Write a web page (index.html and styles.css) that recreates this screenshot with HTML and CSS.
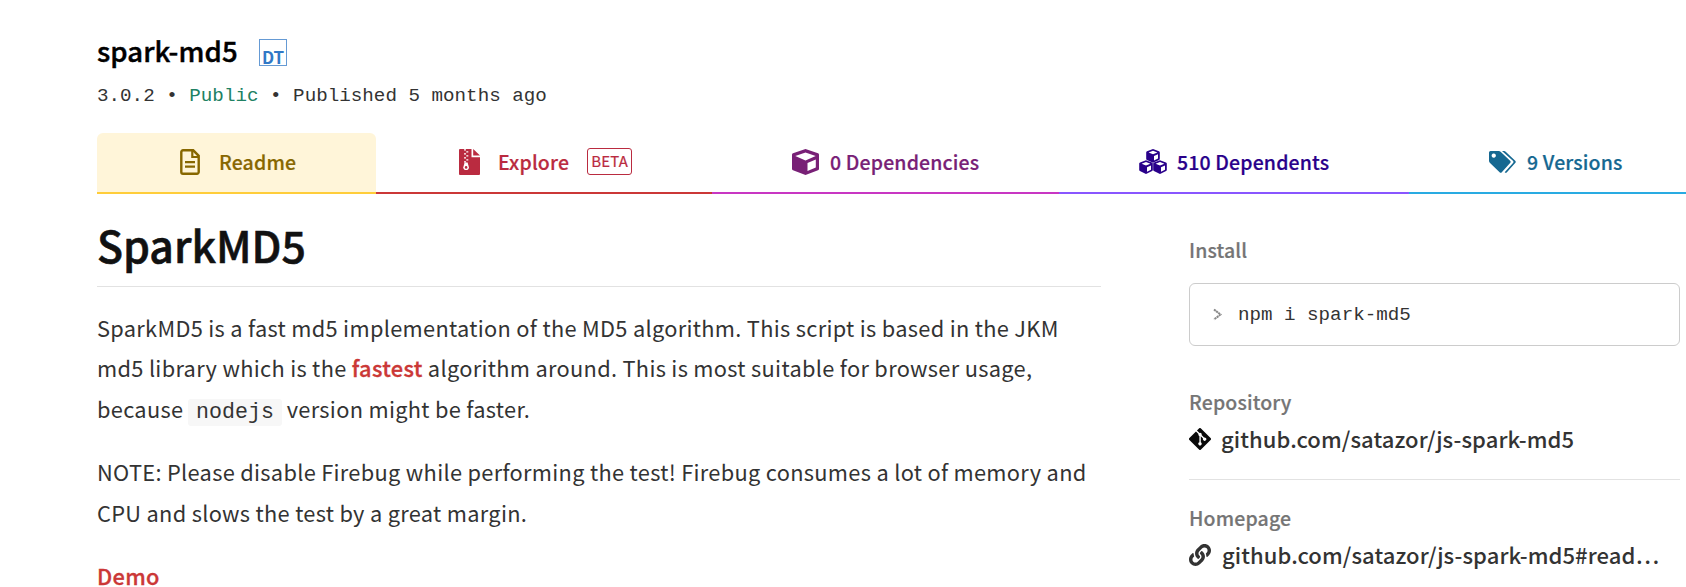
FILE: index.html
```html
<!DOCTYPE html>
<html lang="en">
<head>
<meta charset="utf-8">
<title>spark-md5</title>
<link rel="stylesheet" href="styles.css">
</head>
<body>
<main class="page">
  <header class="package">
    <div class="package-name"><h2 class="name">spark-md5</h2><span class="dt">DT</span></div>
    <div class="meta">3.0.2 • <span class="public">Public</span> • Published 5 months ago</div>
  </header>
  <nav class="tabs">
    <a class="tab readme">
      <svg class="icon-doc" viewBox="0 0 20 26"><path d="M3 1.3h10.2l5.5 5.5V23a1.7 1.7 0 0 1-1.7 1.7H3A1.7 1.7 0 0 1 1.300 23V3A1.700 1.700 0 0 1 3 1.300z" fill="none" stroke="currentColor" stroke-width="2.400"/><path d="M12.300 1.500V8h6.300M5 13.200h10M5 17.700h10" fill="none" stroke="currentColor" stroke-width="2.200"/></svg>
      <span class="label">Readme</span>
    </a>
    <a class="tab explore">
      <svg class="icon-zip" viewBox="0 0 21 26"><path d="M1 0h11.500v8.200H21V25a1 1 0 0 1-1 1H1a1 1 0 0 1-1-1V1a1 1 0 0 1 1-1z" fill="currentColor"/><path d="M14.200 0 21 6.500h-6.800z" fill="currentColor"/><path d="M5 .8h2M7.300 2.800h2M5 4.800h2M7.300 6.800h2M5 8.800h2M7.300 10.800h2M5 12.800h2" stroke="#fff" stroke-width="1.300"/><path d="M5.600 13.500h3l1.300 4.700a2.800 2.800 0 1 1-5.600 0z" fill="#fff"/><circle cx="7.100" cy="18.400" r="1.300" fill="currentColor"/></svg>
      <span class="label">Explore</span><span class="beta">BETA</span>
    </a>
    <a class="tab dependencies">
      <svg class="icon-cube" viewBox="0 0 27 26"><path d="M13.500 0 26 4.300q1 .4 1 1.500v14q0 1-1 1.500L13.500 26 1 21.300q-1-.5-1-1.500v-14q0-1.100 1-1.500zM3.300 7.100l10.200 4.300 10.200-4.300-10.200-3.700zM15.500 14v8l8.300-3.500v-8z" fill="currentColor" fill-rule="evenodd"/></svg>
      <span class="label">0 Dependencies</span>
    </a>
    <a class="tab dependents">
      <svg class="icon-cubes" viewBox="0 0 28 25"><defs><path id="cube" d="M7 0 13 2.300q.8.300.8 1.100v6.400q0 .7-.7 1.100L7 13.700.900 10.900q-.7-.4-.7-1.100V3.400Q.200 2.600 1 2.300zM2.600 3.500 7 5.300l4.400-1.800L7 1.800zM8 7v4.500l4-1.900V5.300z" fill="currentColor" fill-rule="evenodd"/></defs><use href="#cube" x="7"/><use href="#cube" y="11.200"/><use href="#cube" x="14" y="11.200"/></svg>
      <span class="label">510 Dependents</span>
    </a>
    <a class="tab versions">
      <svg class="icon-tags" viewBox="0 0 27 22"><path d="M1.500 0h8.300q1 0 1.800.8l9.500 9q1.100 1.100 0 2.200l-8.300 9.200q-1.100 1.100-2.200 0l-9.800-9.500Q0 10.900 0 9.800V1.500Q0 0 1.500 0zM4.700 2.500a2.100 2.100 0 1 0 .1 0z" fill="currentColor" fill-rule="evenodd"/><path d="M13 0h2.200q.8 0 1.500.7l9.500 9.100q1.100 1.100 0 2.200l-8.300 9.200q-1 1-2.200 0l8.300-9.300q1-1-.1-2.100z" fill="currentColor"/></svg>
      <span class="label">9 Versions</span>
    </a>
  </nav>
  <div class="columns">
    <article class="content">
      <h1 class="heading">SparkMD5</h1>
      <p class="para"><span class="line">SparkMD5 is a fast md5 implementation of the MD5 algorithm. This script is based in the JKM</span> <span class="line">md5 library which is the <a class="link">fastest</a> algorithm around. This is most suitable for browser usage,</span> <span class="line">because <code class="code">nodejs</code> version might be faster.</span></p>
      <p class="para"><span class="line">NOTE: Please disable Firebug while performing the test! Firebug consumes a lot of memory and</span> <span class="line">CPU and slows the test by a great margin.</span></p>
      <p class="para"><a class="link">Demo</a></p>
    </article>
    <aside class="sidebar">
      <h3 class="side-title">Install</h3>
      <div class="install"><svg class="prompt" viewBox="0 0 9 13"><path d="M1 1.500 7.500 6.500 1 11.500" fill="none" stroke="#888" stroke-width="2" stroke-dasharray="2.200 .5"/></svg><code class="command">npm i spark-md5</code></div>
      <section class="side-row repository">
        <h3 class="side-title">Repository</h3>
        <a class="side-link"><svg class="side-icon git" viewBox="0 0 92 92"><path fill="#0a0a0a" d="M90.155 41.965 50.036 1.847a5.918 5.918 0 0 0-8.369 0l-8.330 8.332L43.904 20.746a7.030 7.030 0 0 1 7.230 1.684 7.043 7.043 0 0 1 1.668 7.280l10.187 10.185a7.026 7.026 0 0 1 7.278 1.672 7.040 7.040 0 0 1 0 9.957 7.045 7.045 0 0 1-9.961 0 7.040 7.040 0 0 1-1.532-7.660l-9.500-9.497V59.360a7.040 7.040 0 0 1 1.860 11.290 7.040 7.040 0 0 1-9.957 0 7.040 7.040 0 0 1 0-9.958 7.034 7.034 0 0 1 2.308-1.539V33.926a7.001 7.001 0 0 1-2.308-1.535 7.049 7.049 0 0 1-1.516-7.700L29.242 14.273 1.734 41.777a5.918 5.918 0 0 0 0 8.371L41.855 90.270a5.920 5.920 0 0 0 8.368 0l39.932-39.934a5.925 5.925 0 0 0 0-8.371"/></svg><span class="side-text">github.com/satazor/js-spark-md5</span></a>
      </section>
      <section class="side-row homepage">
        <h3 class="side-title">Homepage</h3>
        <a class="side-link"><svg class="side-icon chain" viewBox="0 0 512 512"><path fill="#333" d="M326.612 185.391c59.747 59.809 58.927 155.698.360 214.590-.110.120-.240.250-.360.370l-67.200 67.200c-59.270 59.270-155.699 59.262-214.960 0-59.270-59.260-59.270-155.700 0-214.960l37.106-37.106c9.840-9.840 26.786-3.300 27.294 10.606.648 17.722 3.826 35.527 9.690 52.721 1.986 5.822.567 12.262-3.783 16.612l-13.087 13.087c-28.026 28.026-28.905 73.660-1.155 101.960 28.024 28.579 74.086 28.749 102.325.510l67.200-67.190c28.191-28.191 28.073-73.757 0-101.830-3.701-3.694-7.429-6.564-10.341-8.569a16.037 16.037 0 0 1-6.947-12.606c-.396-10.567 3.348-21.456 11.698-29.806l21.054-21.055c5.521-5.521 14.182-6.199 20.584-1.731a152.482 152.482 0 0 1 20.522 17.197zM467.547 44.449c-59.261-59.262-155.690-59.270-214.960 0l-67.200 67.200c-.120.120-.250.250-.360.370-58.566 58.892-59.387 154.781.360 214.590a152.454 152.454 0 0 0 20.521 17.196c6.402 4.468 15.064 3.789 20.584-1.731l21.054-21.055c8.350-8.350 12.094-19.239 11.698-29.806a16.037 16.037 0 0 0-6.947-12.606c-2.912-2.005-6.640-4.875-10.341-8.569-28.073-28.073-28.191-73.639 0-101.830l67.200-67.190c28.239-28.239 74.300-28.069 102.325.510 27.750 28.300 26.872 73.934-1.155 101.960l-13.087 13.087c-4.350 4.350-5.769 10.790-3.783 16.612 5.864 17.194 9.042 34.999 9.690 52.721.509 13.906 17.454 20.446 27.294 10.606l37.106-37.106c59.271-59.259 59.271-155.699.001-214.959z"/></svg><span class="side-text">github.com/satazor/js-spark-md5#read…</span></a>
      </section>
    </aside>
  </div>
</main>
</body>
</html>
```
FILE: styles.css
```css
* { box-sizing: border-box; }
html, body { margin: 0; height: 587px; overflow: hidden; background: #fff; }
body { font-family: "Noto Sans CJK SC", "Noto Sans", sans-serif; color: #333; white-space: nowrap; }
h1, h2, h3, p { margin: 0; }
svg { display: block; flex: none; }
.page { height: 587px; padding: 32px 0 0 97px; overflow: hidden; }
.package-name { display: flex; align-items: center; height: 40px; gap: 22px; }
.name { width: 140px; font-size: 27.500px; font-weight: 500; line-height: 40px; color: #000; padding-bottom: 4px; letter-spacing: .08px; -webkit-text-stroke: .45px; }
.dt { width: 28px; height: 27px; border: 1px solid #659ad4; color: #3178c6; font-size: 17px; font-weight: 700; line-height: 33px; text-align: center; }
.meta { height: 30px; margin-top: 9px; font: 19.200px/30px "Liberation Mono", monospace; letter-spacing: .02px; }
.public { color: #208163; }
.tabs { display: flex; width: 1630px; height: 61px; margin-top: 22px; }
.tab { display: flex; align-items: center; height: 61px; padding-bottom: 2px; border-bottom: 2px solid; font-size: 19.500px; font-weight: 500; line-height: 30px; letter-spacing: .14px; }
.label { -webkit-text-stroke: .2px; }
.readme { width: 279px; padding-left: 83px; background: #fff5d9; border-color: #ffcd3a; color: #876700; border-radius: 6px 6px 0 0; }
.explore { width: 336px; padding-left: 83px; border-color: #cb3837; color: #ba2b40; }
.dependencies { width: 347px; padding-left: 80px; border-color: #c836c3; color: #782076; }
.dependents { width: 350px; padding-left: 80px; border-color: #8956ff; color: #29008a; }
.versions { width: 318px; padding-left: 80px; border-color: #29abe2; color: #166891; }
.icon-doc { width: 20px; height: 26px; margin-right: 19px; }
.icon-zip { width: 21px; height: 26px; margin-right: 18px; }
.icon-cube { width: 27px; height: 26px; margin-right: 11px; }
.icon-cubes { width: 28px; height: 25px; margin-right: 10px; }
.icon-tags { width: 27px; height: 22px; margin-right: 11px; }
.beta { width: 45px; height: 27px; margin-left: 18px; border: 1px solid; border-radius: 3px; font-size: 15px; font-weight: 400; line-height: 24px; text-align: center; -webkit-text-stroke: .2px; }
.columns { display: flex; }
.content { width: 1004px; margin-right: 88px; }
.heading { height: 93px; padding-top: 18px; border-bottom: 1px solid #e2e2e2; color: #111; font-size: 42.800px; font-weight: 500; line-height: 64px; margin-bottom: 20.500px; -webkit-text-stroke: .6px; }
.para { font-size: 21.800px; line-height: 40.800px; margin-bottom: 22.300px; letter-spacing: .3px; }
.line { display: block; width: max-content; height: 40.800px; }
.link { color: #cb3837; font-weight: 500; -webkit-text-stroke: .3px; }
.code { display: inline-block; height: 27px; padding: 0 7.500px; border-radius: 3px; background: #f7f7f7; font: 21.600px/27px "Liberation Mono", monospace; letter-spacing: .05px; }
.sidebar { width: 491px; padding-top: 41px; }
.side-title { font-size: 19.500px; font-weight: 500; line-height: 30px; color: #757575; letter-spacing: .14px; -webkit-text-stroke: .2px; }
.install { display: flex; align-items: center; height: 63px; margin-top: 18px; padding-left: 23px; border: 1px solid #ccc; border-radius: 6px; }
.prompt { width: 9px; height: 13px; margin-right: 16px; }
.command { font: 19.200px/30px "Liberation Mono", monospace; padding-top: 1px; }
.repository { margin-top: 41px; height: 93px; border-bottom: 1px solid #e2e2e2; }
.homepage { padding-top: 23px; }
.side-link { display: flex; align-items: center; height: 43px; }
.side-icon { width: 22px; height: 22px; margin-right: 10px; }
.chain { margin-right: 11px; }
.side-text { padding-bottom: 2px; font-size: 22px; font-weight: 500; line-height: 40px; letter-spacing: .08px; }
```
